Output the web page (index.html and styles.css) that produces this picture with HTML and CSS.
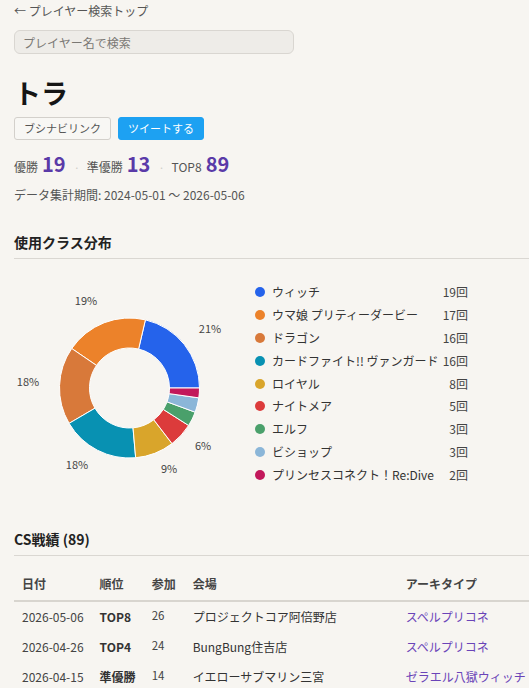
FILE: index.html
```html
<!DOCTYPE html>
<html lang="ja">
<head>
<meta charset="utf-8">
<title>トラ - プレイヤー</title>
<link rel="stylesheet" href="styles.css">
</head>
<body>
<div class="page">
  <a class="back" href="#">← プレイヤー検索トップ</a>
  <div class="search"><input class="search-input" type="text" placeholder="プレイヤー名で検索"></div>
  <h1 class="title">トラ</h1>
  <div class="actions">
    <a class="btn btn-outline" href="#">ブシナビリンク</a>
    <a class="btn btn-tweet" href="#">ツイートする</a>
  </div>
  <div class="stats">
    <span class="stat"><span class="stat-label">優勝</span><span class="stat-num">19</span></span>
    <span class="sep">·</span>
    <span class="stat"><span class="stat-label">準優勝</span><span class="stat-num">13</span></span>
    <span class="sep">·</span>
    <span class="stat"><span class="stat-label">TOP8</span><span class="stat-num">89</span></span>
  </div>
  <p class="period">データ集計期間: 2024-05-01 〜 2026-05-06</p>

  <h2 class="section-title first">使用クラス分布</h2>
  <div class="chart-row">
    <svg class="donut" width="230" height="220" viewBox="0 0 230 220">
      <g stroke="#ffffff" stroke-width="1" stroke-linejoin="round">
        <path fill="#2563eb" d="M131.42 51.83 A70 70 0 0 1 185.5 120 L155.5 120 A40 40 0 0 0 124.60 81.05 Z"/>
        <path fill="#ec822a" d="M57.71 80.48 A70 70 0 0 1 131.42 51.83 L124.60 81.05 A40 40 0 0 0 82.48 97.42 Z"/>
        <path fill="#d8793a" d="M55.09 155.36 A70 70 0 0 1 57.71 80.48 L82.48 97.42 A40 40 0 0 0 80.98 140.20 Z"/>
        <path fill="#0891b2" d="M121.67 189.73 A70 70 0 0 1 55.09 155.36 L80.98 140.20 A40 40 0 0 0 119.02 159.84 Z"/>
        <path fill="#d9a52b" d="M158.03 175.60 A70 70 0 0 1 121.67 189.73 L119.02 159.84 A40 40 0 0 0 139.80 151.77 Z"/>
        <path fill="#dc3b3b" d="M174.64 157.46 A70 70 0 0 1 158.03 175.60 L139.80 151.77 A40 40 0 0 0 149.29 141.41 Z"/>
        <path fill="#4aa06b" d="M181.19 144.20 A70 70 0 0 1 174.64 157.46 L149.29 141.41 A40 40 0 0 0 153.04 133.83 Z"/>
        <path fill="#8bb6d8" d="M184.81 129.85 A70 70 0 0 1 181.19 144.20 L153.04 133.83 A40 40 0 0 0 155.10 125.63 Z"/>
        <path fill="#c2185b" d="M185.5 120 A70 70 0 0 1 184.81 129.85 L155.10 125.63 A40 40 0 0 0 155.5 120 Z"/>
      </g>
      <g class="pct" text-anchor="middle" dominant-baseline="central">
        <text x="196" y="60">21%</text>
        <text x="72" y="32">19%</text>
        <text x="14" y="113">18%</text>
        <text x="63" y="196">18%</text>
        <text x="155" y="200">9%</text>
        <text x="189" y="177">6%</text>
      </g>
    </svg>
    <ul class="legend">
      <li class="legend-item"><span class="dot c-witch"></span><span class="legend-name">ウィッチ</span><span class="legend-count">19回</span></li>
      <li class="legend-item"><span class="dot c-uma"></span><span class="legend-name">ウマ娘 プリティーダービー</span><span class="legend-count">17回</span></li>
      <li class="legend-item"><span class="dot c-dragon"></span><span class="legend-name">ドラゴン</span><span class="legend-count">16回</span></li>
      <li class="legend-item"><span class="dot c-vg"></span><span class="legend-name">カードファイト!! ヴァンガード</span><span class="legend-count">16回</span></li>
      <li class="legend-item"><span class="dot c-royal"></span><span class="legend-name">ロイヤル</span><span class="legend-count">8回</span></li>
      <li class="legend-item"><span class="dot c-night"></span><span class="legend-name">ナイトメア</span><span class="legend-count">5回</span></li>
      <li class="legend-item"><span class="dot c-elf"></span><span class="legend-name">エルフ</span><span class="legend-count">3回</span></li>
      <li class="legend-item"><span class="dot c-bishop"></span><span class="legend-name">ビショップ</span><span class="legend-count">3回</span></li>
      <li class="legend-item"><span class="dot c-prin"></span><span class="legend-name">プリンセスコネクト！Re:Dive</span><span class="legend-count">2回</span></li>
    </ul>
  </div>

  <h2 class="section-title">CS戦績 (89)</h2>
  <table class="results">
    <thead>
      <tr><th class="col-date">日付</th><th class="col-rank">順位</th><th class="col-num">参加</th><th class="col-venue">会場</th><th class="col-arch">アーキタイプ</th></tr>
    </thead>
    <tbody>
      <tr><td class="date">2026-05-06</td><td class="rank">TOP8</td><td class="num">26</td><td class="venue">プロジェクトコア阿倍野店</td><td class="arch"><a href="#">スペルプリコネ</a></td></tr>
      <tr><td class="date">2026-04-26</td><td class="rank">TOP4</td><td class="num">24</td><td class="venue">BungBung住吉店</td><td class="arch"><a href="#">スペルプリコネ</a></td></tr>
      <tr><td class="date">2026-04-15</td><td class="rank">準優勝</td><td class="num">14</td><td class="venue">イエローサブマリン三宮</td><td class="arch"><a href="#">ゼラエル八獄ウィッチ</a></td></tr>
    </tbody>
  </table>
</div>
</body>
</html>
```

FILE: styles.css
```css
html, body {
  margin: 0;
  padding: 0;
  background: #f7f5f1;
  overflow-x: hidden;
}
body {
  font-family: "Noto Sans CJK JP", "Noto Sans", sans-serif;
  color: #333;
  font-size: 12px;
  line-height: 18px;
}
.page {
  padding: 2px 0 0 14px;
}
.back {
  display: block;
  color: #555;
  text-decoration: none;
  font-size: 12px;
  line-height: 18px;
}
.search {
  margin-top: 10px;
}
.search-input {
  box-sizing: border-box;
  width: 280px;
  height: 24px;
  padding: 0 8px;
  border: 1px solid #d9d6d1;
  border-radius: 6px;
  background: #eeece8;
  font-family: inherit;
  font-size: 12px;
  color: #333;
  outline: none;
}
.search-input::placeholder {
  color: #7a7874;
}
.title {
  margin: 22px 0 0;
  font-size: 27px;
  line-height: 34px;
  font-weight: 700;
  color: #151515;
}
.actions {
  display: flex;
  gap: 7px;
  margin-top: 7px;
}
.btn {
  box-sizing: border-box;
  height: 23px;
  line-height: 21px;
  padding: 0 9px;
  border-radius: 3px;
  font-size: 11px;
  text-decoration: none;
}
.btn-outline {
  border: 1px solid #d3d0cb;
  color: #555;
  background: #f8f7f4;
}
.btn-tweet {
  border: 1px solid #1da1f2;
  background: #1da1f2;
  color: #fff;
}
.stats {
  display: flex;
  align-items: baseline;
  margin-top: 15px;
  height: 28px;
}
.stat {
  display: inline-flex;
  align-items: baseline;
  gap: 4px;
}
.stat-label {
  font-size: 12px;
  color: #555;
}
.stat-num {
  font-size: 20px;
  font-weight: 700;
  color: #5a3aa8;
}
.sep {
  color: #d0cdc8;
  margin: 0 7px 0 8px;
  font-size: 11px;
}
.period {
  margin: 3px 0 0;
  font-size: 12px;
  line-height: 18px;
  color: #555;
}
.section-title {
  margin: 41px 0 0;
  padding-bottom: 6px;
  border-bottom: 1px solid #dad7d2;
  font-size: 14px;
  line-height: 20px;
  font-weight: 700;
  color: #222;
}
.section-title.first {
  margin-top: 28px;
}
.chart-row {
  display: flex;
  align-items: flex-start;
  gap: 11px;
  margin-top: 9px;
}
.donut {
  display: block;
  flex: none;
}
.pct text {
  font-family: "Noto Sans CJK JP", "Noto Sans", sans-serif;
  font-size: 11px;
  fill: #444;
}
.legend {
  list-style: none;
  margin: 13px 0 0;
  padding: 0;
  width: 213px;
}
.legend-item {
  display: flex;
  align-items: center;
  height: 22.8px;
}
.dot {
  flex: none;
  width: 10px;
  height: 10px;
  border-radius: 50%;
  margin-right: 7px;
}
.legend-name {
  flex: 1;
  white-space: nowrap;
  color: #333;
}
.legend-count {
  flex: none;
  color: #444;
  text-align: right;
}
.c-witch { background: #2563eb; }
.c-uma { background: #ec822a; }
.c-dragon { background: #d8793a; }
.c-vg { background: #0891b2; }
.c-royal { background: #d9a52b; }
.c-night { background: #dc3b3b; }
.c-elf { background: #4aa06b; }
.c-bishop { background: #8bb6d8; }
.c-prin { background: #c2185b; }

.results {
  margin-top: 11px;
  width: max-content;
  border-collapse: collapse;
  white-space: nowrap;
  font-size: 12px;
}
.results th {
  text-align: left;
  font-weight: 700;
  color: #444;
  padding: 8px 8px 7px;
  line-height: 18px;
  border-bottom: 2px solid #d8d5cf;
}
.results td {
  padding: 6px 8px;
  line-height: 18px;
  vertical-align: middle;
}
.col-date { width: 61px; }
.col-rank { width: 36px; }
.col-num { width: 25px; }
.col-venue { width: 197px; }
.date { color: #444; }
.rank { font-weight: 700; color: #333; }
.results td.num {
  font-size: 11.5px;
  color: #444;
  vertical-align: top;
  padding-top: 4px;
}
.venue { color: #333; }
.arch a {
  color: #6a44b8;
  text-decoration: none;
}
```
